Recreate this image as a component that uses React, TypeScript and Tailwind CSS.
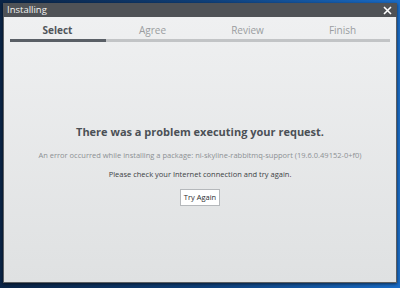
import React from 'react';

const steps = ['Select', 'Agree', 'Review', 'Finish'];

export default function App() {
  return (
    <div className="w-[400px] h-[288px] overflow-hidden bg-gradient-to-r from-[#0b2547] via-[#0f3f78] to-[#1a6cc6] pl-[3px] pt-[3px]">
      <div className="w-[394px] h-[280px] flex flex-col bg-[#5b5e62] shadow-[0_1px_3px_rgba(0,0,0,0.6)]" style={{ fontFamily: '"Open Sans", "Noto Sans", sans-serif' }}>
        {/* title bar */}
        <div className="h-[14px] flex items-center justify-between pl-[4px] pr-[5px] bg-[#4f5256]">
          <span className="text-[9.5px] text-[#f2f2f2] leading-none">Installing</span>
          <svg width="9" height="9" viewBox="0 0 9 9" className="text-white">
            <path d="M1 1 L8 8 M8 1 L1 8" stroke="currentColor" strokeWidth="1.6" />
          </svg>
        </div>

        <div className="flex-1 mx-[1px] mb-[1px] flex flex-col bg-gradient-to-b from-[#eff0f1] to-[#dfe1e2]">
          {/* steps */}
          <div className="px-[6px] pt-[5px]">
            <div className="grid grid-cols-4">
              {steps.map((s, i) => (
                <div
                  key={s}
                  className={
                    i === 0
                      ? 'text-center text-[10px] font-bold text-[#50555a] leading-[16px]'
                      : 'text-center text-[10px] text-[#9a9da0] leading-[16px]'
                  }
                >
                  {s}
                </div>
              ))}
            </div>
            <div className="mt-[1px] h-[3px] bg-[#c2c4c6] flex">
              <div className="w-[96px] bg-[#5a5f66]" />
            </div>
          </div>

          {/* message */}
          <div className="flex-1 flex flex-col items-center pt-[82px]">
            <div className="text-[11px] font-bold text-[#4b5056] leading-[16px]">
              There was a problem executing your request.
            </div>
            <div className="mt-[9px] text-[7.5px] text-[#8c9094] leading-[12px]">
              An error occurred while installing a package: ni-skyline-rabbitmq-support (19.6.0.49152-0+f0)
            </div>
            <div className="mt-[7px] text-[7.5px] text-[#3b3f44] leading-[12px]">
              Please check your Internet connection and try again.
            </div>
            <button className="mt-[9px] h-[17px] px-[3px] bg-white border border-[#b5b8bb] text-[7.5px] text-[#2b2e31] leading-none">
              Try Again
            </button>
          </div>
        </div>
      </div>
    </div>
  );
}
